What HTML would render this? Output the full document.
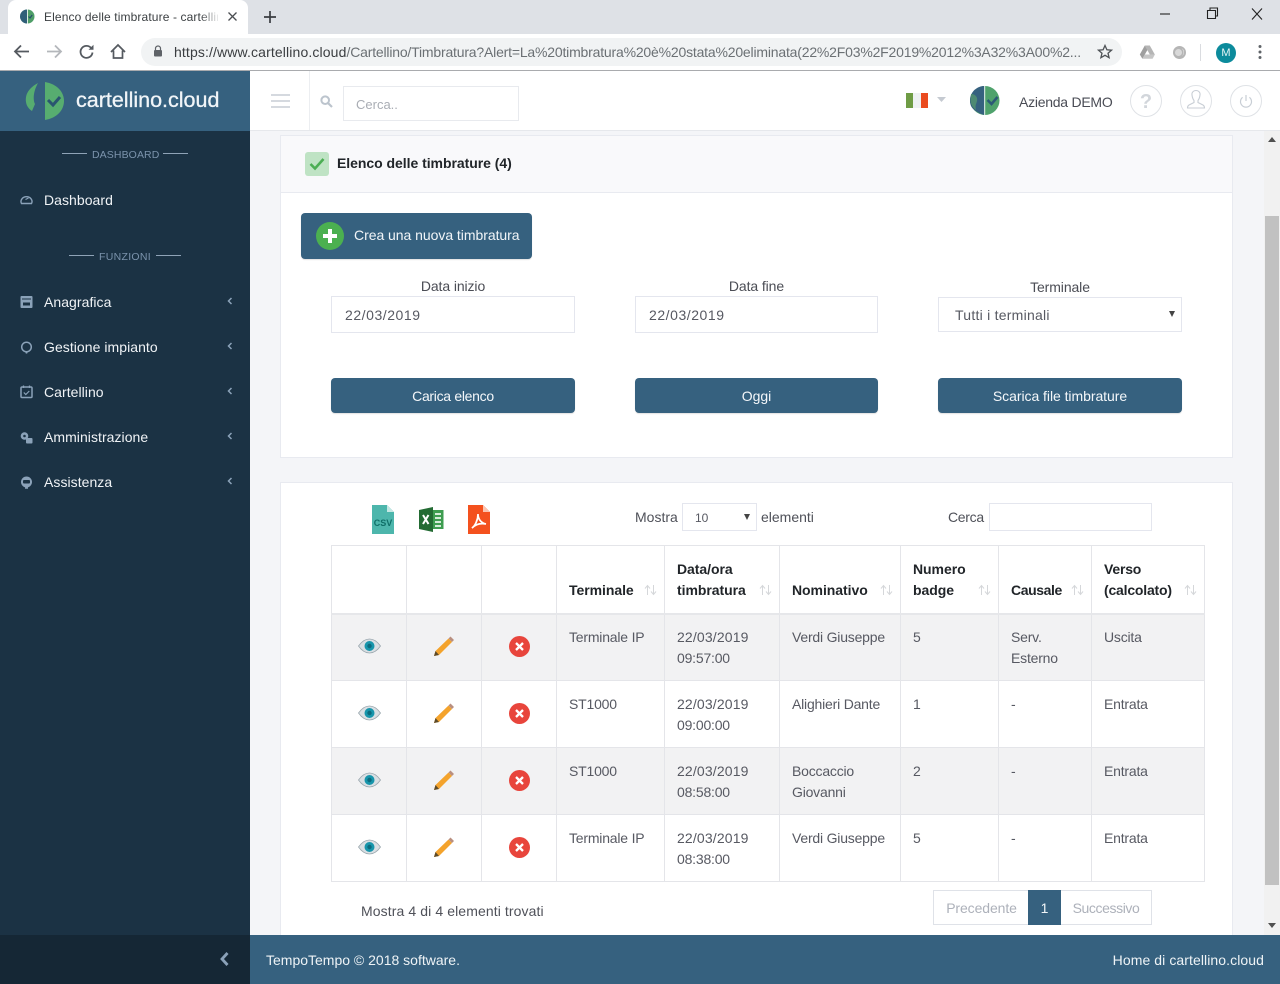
<!DOCTYPE html>
<html lang="it">
<head>
<meta charset="utf-8">
<title>Elenco delle timbrature - cartellino.cloud</title>
<style>
*{box-sizing:border-box}
html,body{margin:0;padding:0;width:1280px;height:984px;overflow:hidden;background:#f4f5f8;font-family:"Liberation Sans",Arial,sans-serif;font-size:14px;color:#575962}
.a{position:absolute}
.t{position:absolute;white-space:nowrap;line-height:20px;letter-spacing:0}
.c{text-align:center}
.side{color:#f0f3f6;font-size:14px;letter-spacing:.05px}
.sec{color:#7b93ac;font-size:10.5px;letter-spacing:.1px}
.ln{position:absolute;height:1px;background:#8fa3b7}
.chev{position:absolute;left:227px;width:6px;height:8px}
.inp{position:absolute;background:#fff;border:1px solid #e4e6ee}
.btn{position:absolute;background:#36617f;border-radius:4px;color:#f4f7fa;text-align:center;line-height:36px;box-shadow:0 1px 1px rgba(0,0,0,.12)}
table{position:absolute;left:331px;top:545px;width:873px;border-collapse:collapse;table-layout:fixed;background:#fff}
th,td{border:1px solid #e4e5e9;padding:0 12px;vertical-align:top;text-align:left;font-weight:normal;line-height:21px;white-space:nowrap}
th{height:68px;vertical-align:bottom;padding-bottom:12px;font-weight:bold;color:#212529;position:relative;border-bottom:2px solid #e6e7ea;letter-spacing:-.05px}
td{height:67px;padding-top:13px;letter-spacing:-.2px}
td b{font-weight:normal;letter-spacing:.15px}
tr.o td{background:#f2f2f3}
tr.f td{padding-top:12px}
.ic{padding:0;position:relative}
.ic svg{position:absolute}
.ar{position:absolute;right:7px;bottom:17px;width:13px;height:12px}
.pg{position:absolute;top:890px;height:35px;line-height:34px;text-align:center;background:#fff;border:1px solid #dfe2e8;color:#adb1ba}
</style>
</head>
<body>
<!-- browser chrome -->
<div class="a" style="left:0;top:0;width:1280px;height:34px;background:#dee1e6"></div>
<div class="a" style="left:8px;top:0;width:240px;height:34px;background:#fff;border-radius:8px 8px 0 0"></div>
<svg class="a" style="left:20px;top:9px" width="15" height="15" viewBox="0 0 15 15"><circle cx="7.500" cy="7.500" r="7" fill="#4f9e68"/><path d="M7 .5A7 7 0 0 0 7 14.500Z" fill="#2f5f78"/><path d="M7.500 0v15" stroke="#fff" stroke-width=".8"/><path d="M8.500 7.500l1.500 1.500 2.200-3" fill="none" stroke="#24506a" stroke-width="1.200"/></svg>
<div class="t" style="left:44px;top:7px;width:174px;overflow:hidden;font-size:12px;color:#3c4043;letter-spacing:.12px">Elenco delle timbrature - cartellino.cloud</div>
<div class="a" style="left:200px;top:6px;width:20px;height:22px;background:linear-gradient(90deg,rgba(255,255,255,0),#fff)"></div>
<svg class="a" style="left:227px;top:11px" width="11" height="11" viewBox="0 0 11 11"><path d="M1.500 1.500l8 8M9.500 1.500l-8 8" stroke="#4b4e52" stroke-width="1.300"/></svg>
<svg class="a" style="left:263px;top:10px" width="14" height="14" viewBox="0 0 14 14"><path d="M7 1v12M1 7h12" stroke="#3a3d41" stroke-width="1.700"/></svg>
<svg class="a" style="left:1155px;top:5px" width="115" height="18" viewBox="0 0 115 18"><path d="M5 9h10" stroke="#222" stroke-width="1.100"/><path d="M52.500 5.500h8v8h-8zM55 5.500V3h7.500v8H60.500" fill="none" stroke="#222" stroke-width="1.100"/><path d="M97 3.500l10 11M107 3.500l-10 11" stroke="#222" stroke-width="1.100"/></svg>
<div class="a" style="left:0;top:34px;width:1280px;height:36px;background:#fff"></div>
<div class="a" style="left:0;top:70px;width:1280px;height:1px;background:#a9abae"></div>
<svg class="a" style="left:13px;top:43px" width="120" height="17" viewBox="0 0 120 17"><path d="M16 8.500H2M8 2.500l-6 6 6 6" fill="none" stroke="#555a60" stroke-width="1.800"/><path d="M48 8.500h-14M42 2.500l6 6-6 6" fill="none" stroke="#b4b7bb" stroke-width="1.800"/><path d="M78.500 5.500a6 6 0 1 0 1 4" fill="none" stroke="#555a60" stroke-width="1.800"/><path d="M80.500 1.800v5h-5z" fill="#555a60"/><path d="M98 9l7-7 7 7M100.500 7.500v7.500h9V7.500" fill="none" stroke="#555a60" stroke-width="1.700"/></svg>
<div class="a" style="left:141px;top:38px;width:981px;height:28px;background:#f1f3f4;border-radius:14px"></div>
<svg class="a" style="left:153px;top:45px" width="10" height="12" viewBox="0 0 10 12"><path d="M2.500 5V3.500a2.500 2.500 0 0 1 5 0V5" fill="none" stroke="#5f6368" stroke-width="1.200"/><rect x="1" y="5" width="8" height="6.500" rx="1" fill="#5f6368"/></svg>
<div class="t" style="left:174px;top:42px;width:912px;overflow:hidden;font-size:14px;color:#6b7074;letter-spacing:-.19px"><span style="color:#3a3d40;letter-spacing:.13px">https://www.cartellino.cloud</span>/Cartellino/Timbratura?Alert=La%20timbratura%20è%20stata%20eliminata(22%2F03%2F2019%2012%3A32%3A00%2...</div>
<svg class="a" style="left:1097px;top:44px" width="16" height="16" viewBox="0 0 16 16"><path d="M8 1.500l1.900 4.300 4.600.4-3.500 3 1.100 4.500L8 11.300l-4.100 2.400L5 9.200l-3.500-3 4.600-.4z" fill="none" stroke="#4f5357" stroke-width="1.300"/></svg>
<svg class="a" style="left:1139px;top:44px" width="17" height="16" viewBox="0 0 17 16"><path d="M5.800 1.500h5l5 9h-5z" fill="#b5b5b5"/><path d="M5.800 1.500L.8 10.500l2.600 4.300 5-8.800z" fill="#9f9f9f"/><path d="M3.400 14.800h10.200l2.300-4.300H5.800z" fill="#c6c6c6"/></svg>
<svg class="a" style="left:1172px;top:45px" width="15" height="15" viewBox="0 0 15 15"><circle cx="7.500" cy="7.500" r="6.500" fill="#b5b5b5"/><path d="M9 3a4.500 4.500 0 0 1 1 8 5 5 0 0 0-1-8z" fill="#eee"/><circle cx="6.500" cy="7.500" r="3.500" fill="#d9d9d9"/></svg>
<div class="a" style="left:1200px;top:44px;width:1px;height:17px;background:#dadce0"></div>
<div class="a" style="left:1216px;top:43px;width:20px;height:20px;border-radius:50%;background:#0c8b9c;color:#e8f6f7;font-size:11px;text-align:center;line-height:20px">M</div>
<svg class="a" style="left:1258px;top:44px" width="4" height="16" viewBox="0 0 4 16"><circle cx="2" cy="2.500" r="1.500" fill="#5f6368"/><circle cx="2" cy="8" r="1.500" fill="#5f6368"/><circle cx="2" cy="13.500" r="1.500" fill="#5f6368"/></svg>

<!-- header -->
<div class="a" style="left:250px;top:71px;width:1030px;height:60px;background:#fff;border-bottom:1px solid #e6e8ec"></div>
<div class="a" style="left:309px;top:71px;width:1px;height:59px;background:#eceef1"></div>
<div class="a" style="left:271px;top:94px;width:19px;height:2px;background:#d5d9df"></div>
<div class="a" style="left:271px;top:100px;width:19px;height:2px;background:#d5d9df"></div>
<div class="a" style="left:271px;top:106px;width:19px;height:2px;background:#d5d9df"></div>
<svg class="a" style="left:320px;top:95px" width="13" height="13" viewBox="0 0 13 13"><circle cx="5.200" cy="5.200" r="3.800" fill="none" stroke="#bcc4cd" stroke-width="2"/><path d="M8 8l4 4" stroke="#bcc4cd" stroke-width="2.200"/></svg>
<div class="inp" style="left:343px;top:86px;width:176px;height:35px;border-color:#e8eaee"></div>
<div class="t" style="left:356px;top:95px;color:#a9adb4;font-size:13px">Cerca..</div>
<div class="a" style="left:906px;top:93px;width:7px;height:15px;background:#6f9c45"></div>
<div class="a" style="left:913px;top:93px;width:8px;height:15px;background:#eef1f3"></div>
<div class="a" style="left:921px;top:93px;width:7px;height:15px;background:#ea4b1f"></div>
<svg class="a" style="left:937px;top:97px" width="9" height="5" viewBox="0 0 9 5"><path d="M0 0h9L4.500 5z" fill="#c5cad1"/></svg>
<svg class="a" style="left:970px;top:86px" width="30" height="29" viewBox="0 0 30 29"><ellipse cx="15" cy="14.500" rx="14.500" ry="14.500" fill="#4fa26c"/><path d="M14 0A14.500 14.500 0 0 0 1 20C3 24 8 27 14 29z" fill="#36617f"/><path d="M1 8c4 0 7 3 6 7s-2 4-1 9c-3-2-5-5-5.500-9.500z" fill="#4e8a73"/><path d="M14.700 0v29" stroke="#e8eef2" stroke-width="1"/><path d="M17.500 14l4 4 6-7" fill="none" stroke="#2c5a76" stroke-width="2.600"/></svg>
<div class="t" style="left:1019px;top:92px;color:#4a4c55;letter-spacing:-.25px">Azienda DEMO</div>
<svg class="a" style="left:1129px;top:84px" width="134" height="34" viewBox="0 0 134 34"><ellipse cx="17" cy="17" rx="15.500" ry="15.500" fill="#fff" stroke="#dfe2e6"/><ellipse cx="67" cy="17" rx="15.500" ry="15.500" fill="#fff" stroke="#dfe2e6"/><ellipse cx="117" cy="17" rx="15.500" ry="15.500" fill="#fff" stroke="#dfe2e6"/><path d="M63 11c-.5-2.500 1.500-4.500 4-4.500s4.500 2 4 4.500c-.3 2.500-1 4.200-2 5.500v2l5 2.500c1.300.7 1.500 1.500 1.500 3h-17c0-1.500.2-2.300 1.500-3l5-2.500v-2c-1-1.300-1.700-3-2-5.500z" fill="none" stroke="#c8ced5" stroke-width="1.100"/><path d="M113.600 13.300a5.500 5.500 0 1 0 6.800 0" fill="none" stroke="#c8ced5" stroke-width="1.200"/><path d="M117 11v6" stroke="#c8ced5" stroke-width="1.200"/></svg>
<div class="t" style="left:1129px;top:92px;width:34px;text-align:center;font-size:20px;font-weight:bold;color:#d2d6db">?</div>

<!-- sidebar -->
<div class="a" style="left:0;top:71px;width:250px;height:60px;background:#36617f"></div>
<div class="a" style="left:0;top:131px;width:250px;height:804px;background:#1b3244"></div>
<div class="a" style="left:0;top:935px;width:250px;height:49px;background:#152735"></div>
<svg class="a" style="left:24px;top:80px" width="42" height="42" viewBox="0 0 42 42"><path d="M14 3C5 8 1 14 2 22c.5 4 3 7 6 9l3-7c-2-4-2-12 3-21z" fill="#57ad70"/><path d="M21 2c12 2 19 10 19 19s-7 17-19 19z" fill="#57ad70"/><path d="M24 20l5 5 7-8" fill="none" stroke="#2a5570" stroke-width="3"/></svg>
<div class="t" style="left:76px;top:87px;line-height:26px;font-size:21.5px;color:#f1f5f8;-webkit-text-stroke:.3px #f1f5f8">cartellino.cloud</div>
<div class="ln" style="left:62px;top:153px;width:25px"></div><div class="t sec" style="left:92px;top:145px">DASHBOARD</div><div class="ln" style="left:163px;top:153px;width:25px"></div>
<div class="ln" style="left:69px;top:255px;width:25px"></div><div class="t sec" style="left:99px;top:247px;letter-spacing:.3px">FUNZIONI</div><div class="ln" style="left:156px;top:255px;width:25px"></div>
<div class="t side" style="left:44px;top:190px">Dashboard</div>
<div class="t side" style="left:44px;top:292px">Anagrafica</div>
<div class="t side" style="left:44px;top:337px">Gestione impianto</div>
<div class="t side" style="left:44px;top:382px">Cartellino</div>
<div class="t side" style="left:44px;top:427px">Amministrazione</div>
<div class="t side" style="left:44px;top:472px">Assistenza</div>
<svg class="a" style="left:20px;top:193px" width="13" height="300" viewBox="0 0 13 300">
<path d="M1.500 10.500a5.500 4.800 0 1 1 10 0z" fill="none" stroke="#8ba2b9" stroke-width="1.400"/><path d="M5.500 6.500l3-1.500" stroke="#8ba2b9" stroke-width="1.100"/>
<rect x=".5" y="103" width="12" height="12" rx="1" fill="#8ba2b9"/><path d="M2 106h9" stroke="#1b3244"/><rect x="3" y="109.500" width="7" height="3" fill="#1b3244"/>
<circle cx="6.500" cy="154" r="4.800" fill="none" stroke="#8ba2b9" stroke-width="1.500"/><circle cx="6.500" cy="159.500" r="1.100" fill="#8ba2b9"/>
<rect x="1" y="194" width="11" height="10.500" rx="1" fill="none" stroke="#8ba2b9" stroke-width="1.500"/><path d="M3.500 192.500v2.500M9.500 192.500v2.500" stroke="#8ba2b9" stroke-width="1.300"/><path d="M3.800 199.500l2 2 3.500-3.500" fill="none" stroke="#8ba2b9" stroke-width="1.200"/>
<circle cx="4.500" cy="243" r="3.800" fill="#8ba2b9"/><circle cx="4.500" cy="243" r="1.300" fill="#1b3244"/><rect x="6" y="245" width="6.500" height="5.500" rx="1" fill="#8ba2b9"/>
<circle cx="6.500" cy="289" r="5.500" fill="#8ba2b9"/><rect x="3" y="287" width="7" height="3.500" rx="1" fill="#1b3244"/><path d="M5 295h3" stroke="#8ba2b9" stroke-width="1.500"/>
</svg>
<svg class="chev" style="top:297px" viewBox="0 0 6 8"><path d="M4.500 1L1.500 4l3 3" fill="none" stroke="#8ba2b9" stroke-width="1.500"/></svg>
<svg class="chev" style="top:342px" viewBox="0 0 6 8"><path d="M4.500 1L1.500 4l3 3" fill="none" stroke="#8ba2b9" stroke-width="1.500"/></svg>
<svg class="chev" style="top:387px" viewBox="0 0 6 8"><path d="M4.500 1L1.500 4l3 3" fill="none" stroke="#8ba2b9" stroke-width="1.500"/></svg>
<svg class="chev" style="top:432px" viewBox="0 0 6 8"><path d="M4.500 1L1.500 4l3 3" fill="none" stroke="#8ba2b9" stroke-width="1.500"/></svg>
<svg class="chev" style="top:477px" viewBox="0 0 6 8"><path d="M4.500 1L1.500 4l3 3" fill="none" stroke="#8ba2b9" stroke-width="1.500"/></svg>
<svg class="a" style="left:219px;top:951px" width="11" height="16" viewBox="0 0 11 16"><path d="M8.500 2L3 8l5.500 6" fill="none" stroke="#8ba2b9" stroke-width="2.800"/></svg>

<!-- scrollbar -->
<div class="a" style="left:1264px;top:131px;width:16px;height:804px;background:#f1f1f1"></div>
<div class="a" style="left:1265px;top:216px;width:14px;height:669px;background:#c1c1c1"></div>
<svg class="a" style="left:1268px;top:137px" width="8" height="5" viewBox="0 0 8 5"><path d="M4 0l4 5H0z" fill="#505050"/></svg>
<svg class="a" style="left:1268px;top:923px" width="8" height="5" viewBox="0 0 8 5"><path d="M0 0h8L4 5z" fill="#505050"/></svg>

<!-- card 1 -->
<div class="a" style="left:280px;top:135px;width:953px;height:323px;background:#fff;border:1px solid #e8eaf0"></div>
<div class="a" style="left:281px;top:136px;width:951px;height:57px;background:#f9f9fb;border-bottom:1px solid #e8eaf0"></div>
<div class="a" style="left:305px;top:152px;width:24px;height:24px;border-radius:3px;background:#bfe3c4"></div>
<svg class="a" style="left:309px;top:157px" width="16" height="14" viewBox="0 0 16 14"><path d="M1.500 7l4.500 4.500L14.500 2" fill="none" stroke="#4cae54" stroke-width="2.600"/></svg>
<div class="t" style="left:337px;top:153px;font-weight:bold;color:#212529;letter-spacing:-.04px">Elenco delle timbrature (4)</div>
<div class="btn" style="left:301px;top:213px;width:231px;height:46px"></div>
<div class="a" style="left:316px;top:222px;width:28px;height:28px;border-radius:50%;background:#4bb050"></div>
<svg class="a" style="left:323px;top:229px" width="14" height="14" viewBox="0 0 14 14"><path d="M7 0v14M0 7h14" stroke="#fff" stroke-width="4"/></svg>
<div class="t" style="left:354px;top:225px;color:#f1f5f8;letter-spacing:-.04px">Crea una nuova timbratura</div>

<div class="t c" style="left:331px;top:276px;width:244px;color:#4b4d55;letter-spacing:-.1px">Data inizio</div>
<div class="t c" style="left:635px;top:276px;width:243px;color:#4b4d55;letter-spacing:-.1px">Data fine</div>
<div class="t c" style="left:938px;top:277px;width:244px;color:#4b4d55;letter-spacing:-.1px">Terminale</div>
<div class="inp" style="left:331px;top:296px;width:244px;height:37px"></div>
<div class="inp" style="left:635px;top:296px;width:243px;height:37px"></div>
<div class="inp" style="left:938px;top:297px;width:244px;height:35px"></div>
<div class="t" style="left:345px;top:305px;letter-spacing:.55px">22/03/2019</div>
<div class="t" style="left:649px;top:305px;letter-spacing:.55px">22/03/2019</div>
<div class="t" style="left:955px;top:305px;letter-spacing:.25px">Tutti i terminali</div>
<svg class="a" style="left:1169px;top:311px" width="6" height="6" viewBox="0 0 6 6"><path d="M0 0h6L3 6z" fill="#444"/></svg>
<div class="btn" style="left:331px;top:378px;width:244px;height:35px;letter-spacing:-.3px">Carica elenco</div>
<div class="btn" style="left:635px;top:378px;width:243px;height:35px">Oggi</div>
<div class="btn" style="left:938px;top:378px;width:244px;height:35px;letter-spacing:-.05px">Scarica file timbrature</div>

<!-- card 2 -->
<div class="a" style="left:280px;top:482px;width:953px;height:453px;background:#fff;border:1px solid #e8eaf0;border-bottom:0"></div>
<svg class="a" style="left:372px;top:505px" width="22" height="29" viewBox="0 0 22 29"><path d="M0 0h15l7 7v22H0z" fill="#4db6ac"/><path d="M15 0l7 7h-7z" fill="#c5e8e4"/><text x="11" y="21" font-family="Liberation Sans" font-size="9" font-weight="bold" fill="#0f6f68" text-anchor="middle">CSV</text></svg>
<svg class="a" style="left:419px;top:507px" width="25" height="25" viewBox="0 0 25 25"><rect x="9" y="3" width="15.500" height="19" fill="#3e9d50"/><path d="M0 3l14-3v25L0 22z" fill="#236b33"/><path d="M16 7h6M16 11h6M16 15h6M16 19h6" stroke="#d5ecd9" stroke-width="2"/><path d="M4 8l5.500 9M9.500 8L4 17" stroke="#fff" stroke-width="2"/></svg>
<svg class="a" style="left:468px;top:505px" width="22" height="29" viewBox="0 0 22 29"><path d="M0 0h15l7 7v22H0z" fill="#f4511e"/><path d="M15 0l7 7h-7z" fill="#fbc4b0"/><path d="M4 23c3-2 6-8 6-14 0 5 3 9 8 10-5-1-10 0-14 4z" fill="none" stroke="#fff" stroke-width="1.700"/></svg>
<div class="t" style="left:635px;top:507px;color:#4f5159">Mostra</div>
<div class="inp" style="left:682px;top:503px;width:75px;height:28px"></div>
<div class="t" style="left:695px;top:508px;font-size:12px;color:#575962">10</div>
<svg class="a" style="left:744px;top:514px" width="6" height="6" viewBox="0 0 6 6"><path d="M0 0h6L3 6z" fill="#444"/></svg>
<div class="t" style="left:761px;top:507px;color:#4f5159">elementi</div>
<div class="t" style="left:948px;top:507px;color:#4f5159;letter-spacing:-.3px">Cerca</div>
<div class="inp" style="left:989px;top:503px;width:163px;height:28px"></div>

<table>
<colgroup><col style="width:75px"><col style="width:75px"><col style="width:75px"><col style="width:108px"><col style="width:115px"><col style="width:121px"><col style="width:98px"><col style="width:93px"><col style="width:113px"></colgroup>
<tr>
<th></th><th></th><th></th>
<th>Terminale<svg class="ar" viewBox="0 0 13 12"><path d="M3.500 11V2M1 4.500l2.500-3 2.500 3M9.500 1v9M7 7.500l2.500 3 2.500-3" fill="none" stroke="#d5d7da"/></svg></th>
<th>Data/ora<br>timbratura<svg class="ar" viewBox="0 0 13 12"><path d="M3.500 11V2M1 4.500l2.500-3 2.500 3M9.500 1v9M7 7.500l2.500 3 2.500-3" fill="none" stroke="#d5d7da"/></svg></th>
<th>Nominativo<svg class="ar" viewBox="0 0 13 12"><path d="M3.500 11V2M1 4.500l2.500-3 2.500 3M9.500 1v9M7 7.500l2.500 3 2.500-3" fill="none" stroke="#d5d7da"/></svg></th>
<th>Numero<br>badge<svg class="ar" viewBox="0 0 13 12"><path d="M3.500 11V2M1 4.500l2.500-3 2.500 3M9.500 1v9M7 7.500l2.500 3 2.500-3" fill="none" stroke="#d5d7da"/></svg></th>
<th style="letter-spacing:-.4px">Causale<svg class="ar" viewBox="0 0 13 12"><path d="M3.500 11V2M1 4.500l2.500-3 2.500 3M9.500 1v9M7 7.500l2.500 3 2.500-3" fill="none" stroke="#d5d7da"/></svg></th>
<th style="letter-spacing:-.2px">Verso<br>(calcolato)<svg class="ar" viewBox="0 0 13 12"><path d="M3.500 11V2M1 4.500l2.500-3 2.500 3M9.500 1v9M7 7.500l2.500 3 2.500-3" fill="none" stroke="#d5d7da"/></svg></th>
</tr>
<tr class="o f">
<td class="ic"><svg style="left:26px;top:23px" width="23" height="16" viewBox="0 0 23 16"><path d="M.5 8C4 3 7.500 1 11.500 1s7.500 2 11 7c-3.500 5-7 7-11 7S4 13 .5 8z" fill="#d9dfe3" stroke="#9aa7ae" stroke-width=".8"/><circle cx="11.500" cy="8" r="5" fill="#1795ab"/><circle cx="11.500" cy="8" r="2.200" fill="#0b6a7d"/></svg></td>
<td class="ic"><svg style="left:26px;top:21px" width="22" height="21" viewBox="0 0 22 21"><path d="M1 20l1.500-5L15.500 2.500l3.500 3.500L6 19z" fill="#f4a32c"/><path d="M15.500 2.500l2-2 3.500 3.500-2 2z" fill="#b98f80"/><path d="M1 20l1.500-5 3.500 4z" fill="#5b4a2a"/></svg></td>
<td class="ic"><svg style="left:26.500px;top:21px" width="21" height="21" viewBox="0 0 21 21"><circle cx="10.500" cy="10.500" r="10.500" fill="#e8453c"/><path d="M7 7l7 7M14 7l-7 7" stroke="#fff" stroke-width="2.300"/></svg></td>
<td>Terminale IP</td><td><b>22/03/2019</b><br>09:57:00</td><td>Verdi Giuseppe</td><td>5</td><td>Serv.<br>Esterno</td><td>Uscita</td>
</tr>
<tr>
<td class="ic"><svg style="left:26px;top:24px" width="23" height="16" viewBox="0 0 23 16"><path d="M.5 8C4 3 7.500 1 11.500 1s7.500 2 11 7c-3.500 5-7 7-11 7S4 13 .5 8z" fill="#d9dfe3" stroke="#9aa7ae" stroke-width=".8"/><circle cx="11.500" cy="8" r="5" fill="#1795ab"/><circle cx="11.500" cy="8" r="2.200" fill="#0b6a7d"/></svg></td>
<td class="ic"><svg style="left:26px;top:22px" width="22" height="21" viewBox="0 0 22 21"><path d="M1 20l1.500-5L15.500 2.500l3.500 3.500L6 19z" fill="#f4a32c"/><path d="M15.500 2.500l2-2 3.500 3.500-2 2z" fill="#b98f80"/><path d="M1 20l1.500-5 3.500 4z" fill="#5b4a2a"/></svg></td>
<td class="ic"><svg style="left:26.500px;top:22px" width="21" height="21" viewBox="0 0 21 21"><circle cx="10.500" cy="10.500" r="10.500" fill="#e8453c"/><path d="M7 7l7 7M14 7l-7 7" stroke="#fff" stroke-width="2.300"/></svg></td>
<td>ST1000</td><td><b>22/03/2019</b><br>09:00:00</td><td>Alighieri Dante</td><td>1</td><td>-</td><td>Entrata</td>
</tr>
<tr class="o">
<td class="ic"><svg style="left:26px;top:24px" width="23" height="16" viewBox="0 0 23 16"><path d="M.5 8C4 3 7.500 1 11.500 1s7.500 2 11 7c-3.500 5-7 7-11 7S4 13 .5 8z" fill="#d9dfe3" stroke="#9aa7ae" stroke-width=".8"/><circle cx="11.500" cy="8" r="5" fill="#1795ab"/><circle cx="11.500" cy="8" r="2.200" fill="#0b6a7d"/></svg></td>
<td class="ic"><svg style="left:26px;top:22px" width="22" height="21" viewBox="0 0 22 21"><path d="M1 20l1.500-5L15.500 2.500l3.500 3.500L6 19z" fill="#f4a32c"/><path d="M15.500 2.500l2-2 3.500 3.500-2 2z" fill="#b98f80"/><path d="M1 20l1.500-5 3.500 4z" fill="#5b4a2a"/></svg></td>
<td class="ic"><svg style="left:26.500px;top:22px" width="21" height="21" viewBox="0 0 21 21"><circle cx="10.500" cy="10.500" r="10.500" fill="#e8453c"/><path d="M7 7l7 7M14 7l-7 7" stroke="#fff" stroke-width="2.300"/></svg></td>
<td>ST1000</td><td><b>22/03/2019</b><br>08:58:00</td><td>Boccaccio<br>Giovanni</td><td>2</td><td>-</td><td>Entrata</td>
</tr>
<tr>
<td class="ic"><svg style="left:26px;top:24px" width="23" height="16" viewBox="0 0 23 16"><path d="M.5 8C4 3 7.500 1 11.500 1s7.500 2 11 7c-3.500 5-7 7-11 7S4 13 .5 8z" fill="#d9dfe3" stroke="#9aa7ae" stroke-width=".8"/><circle cx="11.500" cy="8" r="5" fill="#1795ab"/><circle cx="11.500" cy="8" r="2.200" fill="#0b6a7d"/></svg></td>
<td class="ic"><svg style="left:26px;top:22px" width="22" height="21" viewBox="0 0 22 21"><path d="M1 20l1.500-5L15.500 2.500l3.500 3.500L6 19z" fill="#f4a32c"/><path d="M15.500 2.500l2-2 3.500 3.500-2 2z" fill="#b98f80"/><path d="M1 20l1.500-5 3.500 4z" fill="#5b4a2a"/></svg></td>
<td class="ic"><svg style="left:26.500px;top:22px" width="21" height="21" viewBox="0 0 21 21"><circle cx="10.500" cy="10.500" r="10.500" fill="#e8453c"/><path d="M7 7l7 7M14 7l-7 7" stroke="#fff" stroke-width="2.300"/></svg></td>
<td>Terminale IP</td><td><b>22/03/2019</b><br>08:38:00</td><td>Verdi Giuseppe</td><td>5</td><td>-</td><td>Entrata</td>
</tr>
</table>

<div class="t" style="left:361px;top:901px;color:#4f5159;letter-spacing:.1px">Mostra 4 di 4 elementi trovati</div>
<div class="pg" style="left:933px;width:96px;border-right:0;letter-spacing:-.1px">Precedente</div>
<div class="pg" style="left:1028px;width:33px;background:#36617f;border-color:#36617f;color:#f0f4f7">1</div>
<div class="pg" style="left:1061px;width:91px;border-left:0;letter-spacing:-.4px">Successivo</div>

<!-- footer -->
<div class="a" style="left:250px;top:935px;width:1030px;height:49px;background:#36617f"></div>
<div class="t" style="left:266px;top:950px;color:#eef3f6">TempoTempo © 2018 software.</div>
<div class="t" style="right:16px;top:950px;color:#eef3f6;letter-spacing:.08px">Home di cartellino.cloud</div>
</body>
</html>
